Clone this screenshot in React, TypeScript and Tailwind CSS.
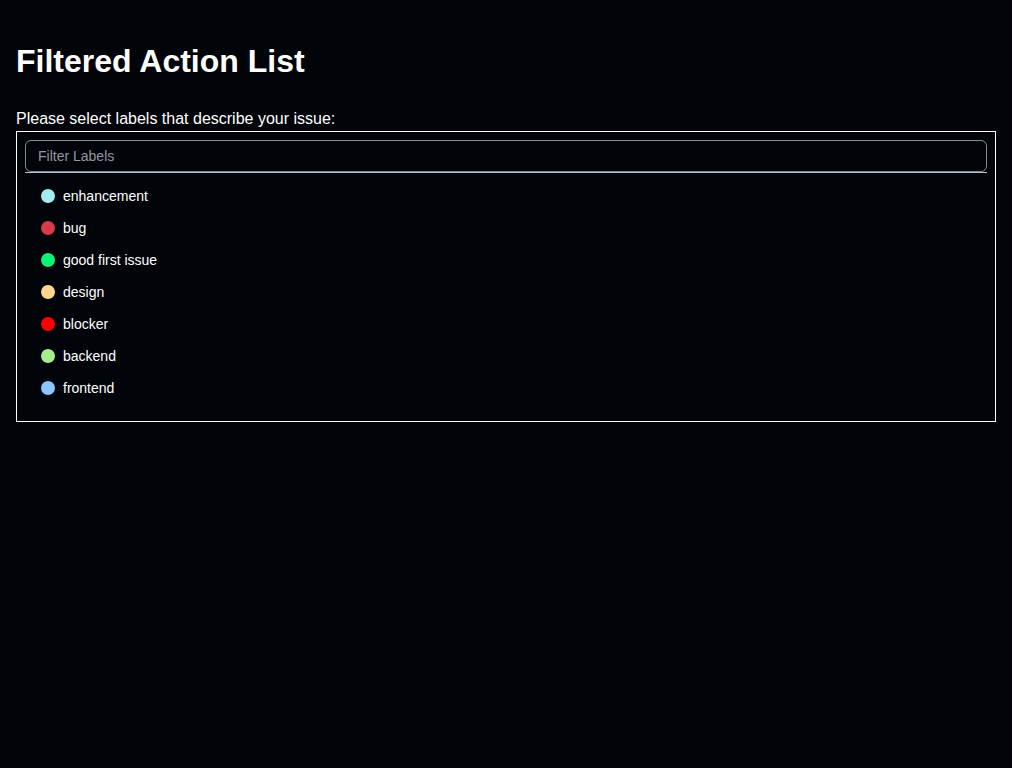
const labels = [
  { name: 'enhancement', color: '#a2eeef' },
  { name: 'bug', color: '#d73a4a' },
  { name: 'good first issue', color: '#0cf478' },
  { name: 'design', color: '#ffd78e' },
  { name: 'blocker', color: '#ff0000' },
  { name: 'backend', color: '#a8ec8c' },
  { name: 'frontend', color: '#8dc6ff' },
]

const App = () => {
  return (
    <div className="min-h-screen bg-[#010409] px-4 pt-[43px] text-white font-['Liberation_Sans',Arial,sans-serif]">
      <h1 className="text-[32px] leading-[37px] font-bold">Filtered Action List</h1>
      <p className="mt-[29px] text-base leading-[19px]">Please select labels that describe your issue:</p>
      <div className="mt-[3px] border border-white p-2">
        <div className="border-b border-[#b7bdc8]">
          <div className="h-8 rounded-md border border-[#848d97] px-3 flex items-center text-sm text-[#9198a1]">
            Filter Labels
          </div>
        </div>
        <ul className="pt-[7px] pb-[9px]">
          {labels.map((label) => (
            <li key={label.name} className="h-8 flex items-center gap-2 px-4 text-sm text-white">
              <span className="w-[14px] h-[14px] rounded-full shrink-0" style={{ backgroundColor: label.color }} />
              <span>{label.name}</span>
            </li>
          ))}
        </ul>
      </div>
    </div>
  )
}

export default App
